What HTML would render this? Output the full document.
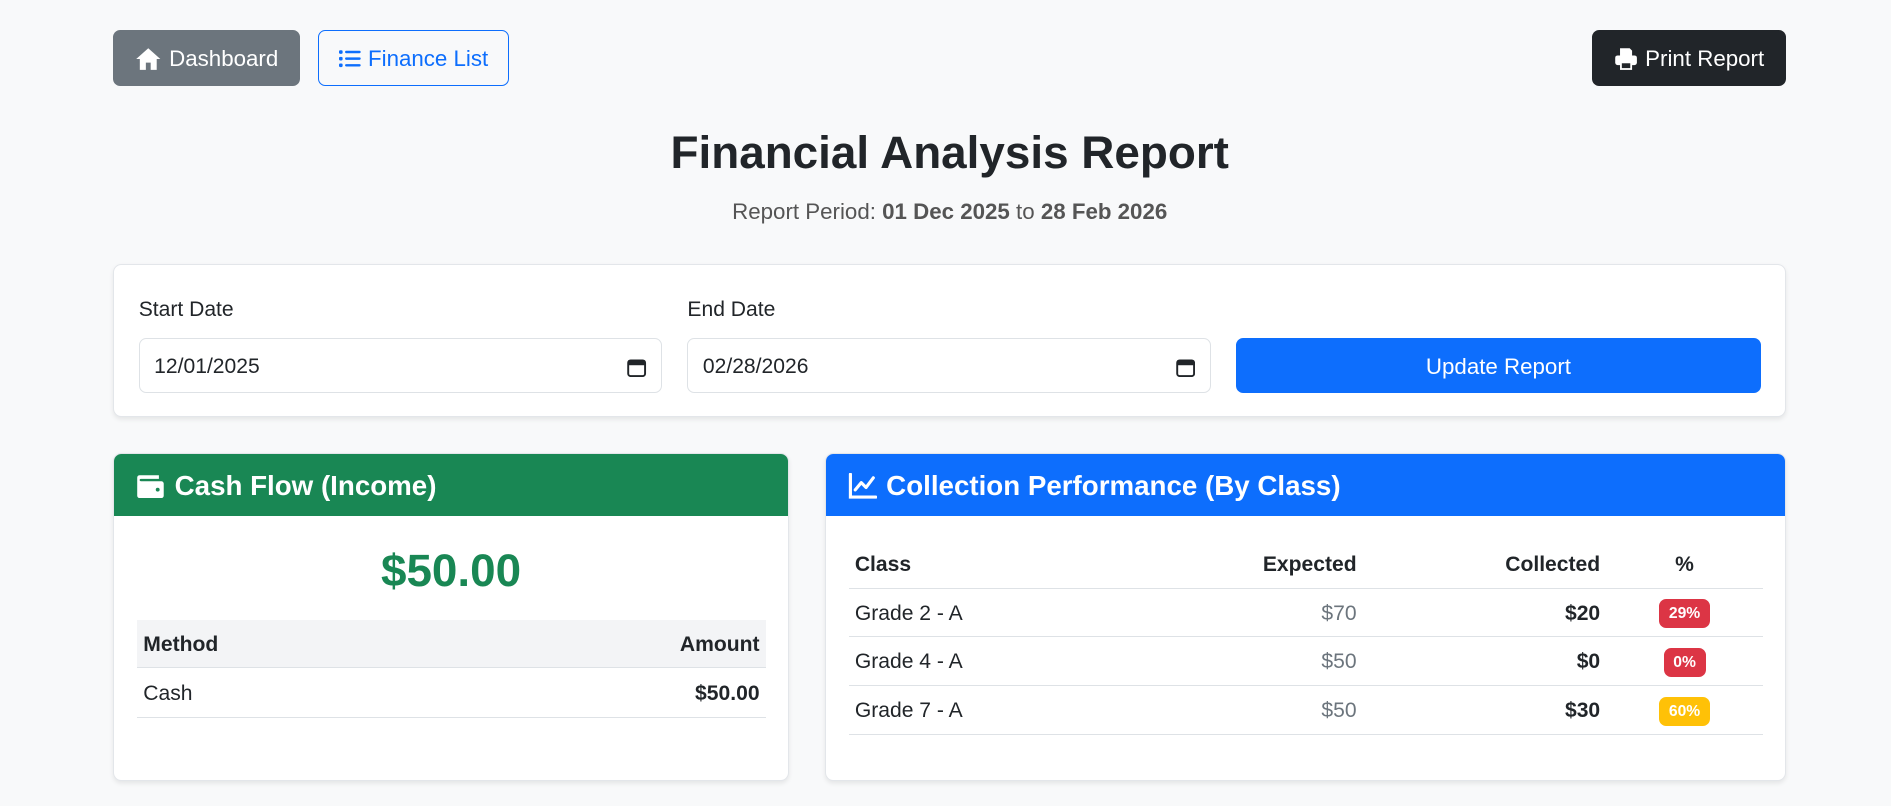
<!DOCTYPE html>
<html><head><meta charset="utf-8"><style>
html{zoom:1.206}
body{margin:0;background:#f8f9fa;font-family:"Liberation Sans",sans-serif;color:#212529;width:1568px;height:668px;position:relative;overflow:hidden}
.abs{position:absolute;box-sizing:border-box}
.btn{display:flex;align-items:center;justify-content:center;gap:6px;border-radius:6px;font-size:18.5px;padding-top:2px}
svg{display:block}
.card{background:#fff;border:1px solid #e3e6ea;border-radius:7px;box-shadow:0 2px 4px rgba(0,0,0,.08);overflow:hidden}
.hdr{height:51px;color:#fff;font-size:23px;font-weight:bold;display:flex;align-items:center;gap:8px;padding-left:18px;padding-top:2px;box-sizing:border-box}
.lbl{font-size:17.5px}
.inp{border:1px solid #dee2e6;border-radius:6px;background:#fff;font-size:17.5px;display:flex;align-items:center;justify-content:space-between;padding:3px 12px 0}
table{border-collapse:collapse;font-size:17.5px}
td,th{padding:2px 5px 0}
tr{border-bottom:1px solid #dee2e6}
.badge{display:inline-block;color:#fff;font-size:13px;font-weight:bold;border-radius:6px;padding:5px 8px 4px}
</style></head><body>
<div class="abs btn" style="left:94px;top:25px;width:155px;height:46px;background:#6c757d;color:#fff">
<svg width="22" height="20" viewBox="0 0 22 20"><path d="M11 1L1 10h3v9h5v-6h4v6h5v-9h3z" fill="#fff"/></svg>Dashboard</div>
<div class="abs btn" style="left:264px;top:25px;width:158px;height:46px;border:1px solid #0d6efd;color:#0d6efd">
<svg width="18" height="16" viewBox="0 0 18 16"><g fill="#0d6efd"><rect x="0" y="1" width="3" height="3" rx="1"/><rect x="0" y="6.5" width="3" height="3" rx="1"/><rect x="0" y="12" width="3" height="3" rx="1"/><rect x="5" y="1.5" width="13" height="2" rx="1"/><rect x="5" y="7" width="13" height="2" rx="1"/><rect x="5" y="12.5" width="13" height="2" rx="1"/></g></svg>Finance List</div>
<div class="abs btn" style="left:1320px;top:25px;width:161px;height:46px;background:#212529;color:#fff">
<svg width="20" height="20" viewBox="0 0 20 20"><g fill="#fff"><path d="M5 1h8l2 2v4H5z"/><rect x="1" y="7" width="18" height="8" rx="2"/><rect x="5" y="12" width="10" height="7"/></g><rect x="6.5" y="13.5" width="7" height="4" fill="#212529"/></svg>Print Report</div>
<div class="abs" style="left:94px;width:1387px;top:105px;text-align:center;font-size:38px;font-weight:bold">Financial Analysis Report</div>
<div class="abs" style="left:94px;width:1387px;top:165px;text-align:center;font-size:18.5px;color:#555">Report Period: <b>01 Dec 2025</b> to <b>28 Feb 2026</b></div>
<div class="abs card" style="left:94px;top:219px;width:1387px;height:127px"></div>
<div class="abs lbl" style="left:115px;top:247px">Start Date</div>
<div class="abs lbl" style="left:570px;top:247px">End Date</div>
<div class="abs inp" style="left:115px;top:280px;width:434px;height:46px">12/01/2025<svg width="16" height="16" viewBox="0 0 16 16"><rect x="1" y="2" width="14" height="13" rx="2" fill="none" stroke="#212529" stroke-width="1.6"/><rect x="1" y="2" width="14" height="4" fill="#212529"/></svg></div>
<div class="abs inp" style="left:570px;top:280px;width:434px;height:46px">02/28/2026<svg width="16" height="16" viewBox="0 0 16 16"><rect x="1" y="2" width="14" height="13" rx="2" fill="none" stroke="#212529" stroke-width="1.6"/><rect x="1" y="2" width="14" height="4" fill="#212529"/></svg></div>
<div class="abs btn" style="left:1025px;top:280px;width:435px;height:46px;background:#0d6efd;color:#fff">Update Report</div>

<div class="abs card" style="left:94px;top:376px;width:560px;height:272px">
<div class="hdr" style="background:#198754"><svg width="24" height="20" viewBox="0 0 24 20"><path d="M3 1h16v3H4a1 1 0 000 2h17a2 2 0 012 2v10a2 2 0 01-2 2H3a2 2 0 01-2-2V3a2 2 0 012-2z" fill="#fff"/><circle cx="18" cy="13" r="1.6" fill="#198754"/></svg>Cash Flow (Income)</div>
<div style="text-align:center;font-size:38px;font-weight:bold;color:#198754;margin-top:24px">$50.00</div>
<table style="position:absolute;left:19px;top:137px;width:521px">
<tr style="height:40px;background:#f3f4f6;font-weight:bold"><td>Method</td><td style="text-align:right">Amount</td></tr>
<tr style="height:41px"><td>Cash</td><td style="text-align:right;font-weight:bold">$50.00</td></tr>
</table></div>

<div class="abs card" style="left:684px;top:376px;width:797px;height:272px">
<div class="hdr" style="background:#0d6efd"><svg width="24" height="22" viewBox="0 0 24 22"><path d="M2 1v19h21" fill="none" stroke="#fff" stroke-width="2.6" stroke-linecap="round"/><path d="M6 14l5-6 4 4 6-8" fill="none" stroke="#fff" stroke-width="2.6" stroke-linecap="round" stroke-linejoin="round"/></svg>Collection Performance (By Class)</div>
<table style="position:absolute;left:19px;top:70px;width:758px">
<tr style="height:41px;font-weight:bold"><td>Class</td><td style="text-align:right">Expected</td><td style="text-align:right">Collected</td><td style="text-align:center;width:120px">%</td></tr>
<tr style="height:40px"><td>Grade 2 - A</td><td style="text-align:right;color:#6c757d">$70</td><td style="text-align:right;font-weight:bold">$20</td><td style="text-align:center"><span class="badge" style="background:#dc3545">29%</span></td></tr>
<tr style="height:41px"><td>Grade 4 - A</td><td style="text-align:right;color:#6c757d">$50</td><td style="text-align:right;font-weight:bold">$0</td><td style="text-align:center"><span class="badge" style="background:#dc3545">0%</span></td></tr>
<tr style="height:40px"><td>Grade 7 - A</td><td style="text-align:right;color:#6c757d">$50</td><td style="text-align:right;font-weight:bold">$30</td><td style="text-align:center"><span class="badge" style="background:#ffc107">60%</span></td></tr>
</table></div>
</body></html>
